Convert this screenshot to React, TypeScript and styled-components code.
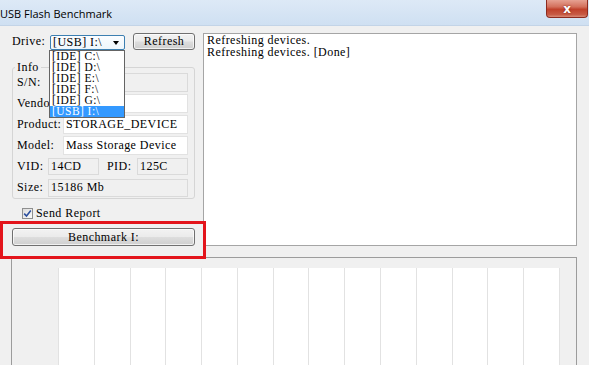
import React from "react";
import styled, { createGlobalStyle } from "styled-components";

const ui = `"Liberation Serif", "DejaVu Serif", serif`;

const GlobalStyle = createGlobalStyle`
  html, body {
    margin: 0;
    padding: 0;
    width: 589px;
    height: 365px;
    overflow: hidden;
    background: #f0f0f0;
  }
  * { box-sizing: border-box; }
`;

const Window = styled.div`
  width: 589px;
  height: 365px;
  display: flex;
  flex-direction: column;
  font-family: ${ui};
  font-size: 12px;
  letter-spacing: 0.45px;
  color: #000;
`;

const TitleBar = styled.div`
  height: 26px;
  flex: none;
  display: flex;
  justify-content: space-between;
  align-items: flex-start;
  background: linear-gradient(#dde9f6, #cfe0f2);
  border-bottom: 1px solid #c3d4e7;
  letter-spacing: 0;
`;

const Title = styled.div`
  font-family: "Open Sans", "Noto Sans", sans-serif;
  font-size: 11px;
  line-height: 16px;
  padding-top: 6px;
  color: #000;
`;

const CloseButton = styled.div`
  width: 42px;
  height: 18px;
  margin-right: 1px;
  border: 1px solid #8c2b1f;
  border-top: none;
  border-radius: 0 0 4px 4px;
  background: linear-gradient(#e6a192 0%, #d3705c 40%, #c0412b 55%, #c75a44 85%, #d98a76 100%);
  display: flex;
  align-items: center;
  justify-content: center;
  color: #fff;
  font-family: "DejaVu Sans", sans-serif;
  font-weight: bold;
  font-size: 12px;
  line-height: 1;
  text-shadow: 0 0 2px #7a1a10;
`;

const Body = styled.div`
  position: relative;
  flex: 1;
  display: flex;
  flex-direction: column;
  padding: 7px 12px 0 12px;
  background: #f0f0f0;
`;

const TopRow = styled.div`
  display: flex;
  gap: 8px;
  height: 213px;
  flex: none;
`;

const LeftPanel = styled.div`
  width: 183px;
  display: flex;
  flex-direction: column;
`;

const DriveRow = styled.div`
  display: flex;
  align-items: center;
  height: 17px;
`;

const DriveLabel = styled.span`
  width: 38px;
  white-space: nowrap;
`;

const ComboWrap = styled.div`
  position: relative;
  align-self: flex-end;
  width: 75px;
  height: 15px;
`;

const Combo = styled.div`
  height: 15px;
  border: 1px solid #3c7fb1;
  border-radius: 2px;
  background: linear-gradient(#fbfdff, #eef6fc);
  display: flex;
  align-items: center;
  justify-content: space-between;
  padding: 0 5px 0 2px;
  line-height: 13px;
  white-space: nowrap;
`;

const Arrow = styled.span`
  width: 0;
  height: 0;
  border-left: 3.5px solid transparent;
  border-right: 3.5px solid transparent;
  border-top: 4px solid #000;
`;

const DropList = styled.ul`
  position: absolute;
  top: 15px;
  left: -1px;
  width: 76px;
  margin: 0;
  padding: 0;
  list-style: none;
  background: #fff;
  border: 1px solid #646464;
  z-index: 2;
`;

const DropItem = styled.li<{ $selected?: boolean }>`
  height: 11px;
  font-size: 11.5px;
  line-height: 11px;
  padding-left: 2px;
  white-space: nowrap;
  overflow: hidden;
  background: ${(p) => (p.$selected ? "#3399ff" : "transparent")};
  color: ${(p) => (p.$selected ? "#fff" : "#000")};
`;

const Button = styled.div<{ $w?: number; $h: number }>`
  width: ${(p) => (p.$w ? `${p.$w}px` : "auto")};
  height: ${(p) => p.$h}px;
  border: 1px solid #707070;
  border-radius: 3px;
  background: linear-gradient(#f2f2f2 0%, #ebebeb 48%, #dddddd 52%, #cfcfcf 100%);
  box-shadow: inset 0 0 0 1px rgba(255, 255, 255, 0.7);
  display: flex;
  align-items: center;
  justify-content: center;
  white-space: nowrap;
`;

const RefreshButton = styled(Button)`
  margin-left: 8px;
`;

const InfoGroup = styled.div`
  position: relative;
  margin-top: 17px;
  height: 133px;
  border: 1px solid #d5d5d5;
  border-radius: 3px;
  padding: 5px 6px 0 4px;
  display: flex;
  flex-direction: column;
  gap: 2px;
`;

const Legend = styled.span`
  position: absolute;
  top: -7px;
  left: 2px;
  padding: 0 2px;
  line-height: 13px;
  background: #f0f0f0;
`;

const FieldRow = styled.div`
  display: flex;
  align-items: center;
  height: 19px;
`;

const FieldLabel = styled.span<{ $w: number; $gap?: number }>`
  width: ${(p) => p.$w}px;
  margin-left: ${(p) => p.$gap ?? 0}px;
  white-space: nowrap;
  flex: none;
`;

const Field = styled.div<{ $disabled?: boolean; $w?: number; $h?: number }>`
  ${(p) => (p.$w ? `width: ${p.$w}px; flex: none;` : "flex: 1;")}
  height: ${(p) => p.$h ?? 19}px;
  border: 1px solid ${(p) => (p.$disabled ? "#dadada" : "#e2e2e2")};
  background: ${(p) => (p.$disabled ? "#f0f0f0" : "#fff")};
  padding-left: 2px;
  display: flex;
  align-items: center;
  white-space: nowrap;
  overflow: hidden;
`;

const SendRow = styled.div`
  display: flex;
  align-items: center;
  height: 11px;
  margin-top: 9px;
  padding-left: 10px;
  gap: 3px;
`;

const CheckBox = styled.span`
  width: 11px;
  height: 11px;
  border: 1px solid #8e8f8f;
  background: linear-gradient(135deg, #dcdcdc, #fbfbfb);
  display: flex;
  align-items: center;
  justify-content: center;
`;

const BenchmarkButton = styled(Button)`
  margin-top: 9px;
`;

const LogBox = styled.div`
  width: 374px;
  height: 213px;
  border: 1px solid #a5a5a5;
  background: #fff;
  padding: 1px 3px;
  line-height: 11.5px;
  white-space: pre;
`;

const BottomGroup = styled.div`
  flex: 1;
  margin-top: 11px;
  margin-left: -1px;
  width: 566px;
  border: 1px solid #9c9c9c;
  border-bottom: none;
  padding: 10px 16px 0 46px;
  display: flex;
`;

const Chart = styled.div`
  flex: 1;
  display: flex;
  background: #fff;
  border-left: 1px solid #e2e2e2;
`;

const ChartColumn = styled.div`
  flex: 1;
  border-right: 1px solid #e2e2e2;
`;

const Annotation = styled.div`
  position: absolute;
  left: 0;
  top: 195px;
  width: 206px;
  height: 38px;
  border: 3px solid #e3141b;
  pointer-events: none;
`;

const drives = ["[IDE] C:\\", "[IDE] D:\\", "[IDE] E:\\", "[IDE] F:\\", "[IDE] G:\\", "[USB] I:\\"];

export default function App() {
  return (
    <>
      <GlobalStyle />
      <Window>
        <TitleBar>
          <Title>USB Flash Benchmark</Title>
          <CloseButton>x</CloseButton>
        </TitleBar>
        <Body>
          <TopRow>
            <LeftPanel>
              <DriveRow>
                <DriveLabel>Drive:</DriveLabel>
                <ComboWrap>
                  <Combo>
                    <span>[USB] I:\</span>
                    <Arrow />
                  </Combo>
                  <DropList>
                    {drives.map((d, i) => (
                      <DropItem key={d} $selected={i === drives.length - 1}>
                        {d}
                      </DropItem>
                    ))}
                  </DropList>
                </ComboWrap>
                <RefreshButton $w={62} $h={17}>Refresh</RefreshButton>
              </DriveRow>
              <InfoGroup>
                <Legend>Info</Legend>
                <FieldRow>
                  <FieldLabel $w={46}>S/N:</FieldLabel>
                  <Field $disabled />
                </FieldRow>
                <FieldRow>
                  <FieldLabel $w={46}>Vendor:</FieldLabel>
                  <Field />
                </FieldRow>
                <FieldRow>
                  <FieldLabel $w={46}>Product:</FieldLabel>
                  <Field>STORAGE_DEVICE</Field>
                </FieldRow>
                <FieldRow>
                  <FieldLabel $w={46}>Model:</FieldLabel>
                  <Field>Mass Storage Device</Field>
                </FieldRow>
                <FieldRow>
                  <FieldLabel $w={31}>VID:</FieldLabel>
                  <Field $disabled $w={51} $h={17}>14CD</Field>
                  <FieldLabel $w={30} $gap={8}>PID:</FieldLabel>
                  <Field $disabled $h={17}>125C</Field>
                </FieldRow>
                <FieldRow>
                  <FieldLabel $w={31}>Size:</FieldLabel>
                  <Field $disabled $h={18}>15186 Mb</Field>
                </FieldRow>
              </InfoGroup>
              <SendRow>
                <CheckBox>
                  <svg width="9" height="9" viewBox="0 0 9 9">
                    <path d="M1.2 4.6 L3.5 7 L7.8 1.6" fill="none" stroke="#2c4f9e" strokeWidth="1.6" />
                  </svg>
                </CheckBox>
                <span>Send Report</span>
              </SendRow>
              <BenchmarkButton $h={18}>Benchmark I:</BenchmarkButton>
            </LeftPanel>
            <LogBox>{"Refreshing devices.\nRefreshing devices. [Done]"}</LogBox>
          </TopRow>
          <BottomGroup>
            <Chart>
              {Array.from({ length: 14 }).map((_, i) => (
                <ChartColumn key={i} />
              ))}
            </Chart>
          </BottomGroup>
          <Annotation />
        </Body>
      </Window>
    </>
  );
}
